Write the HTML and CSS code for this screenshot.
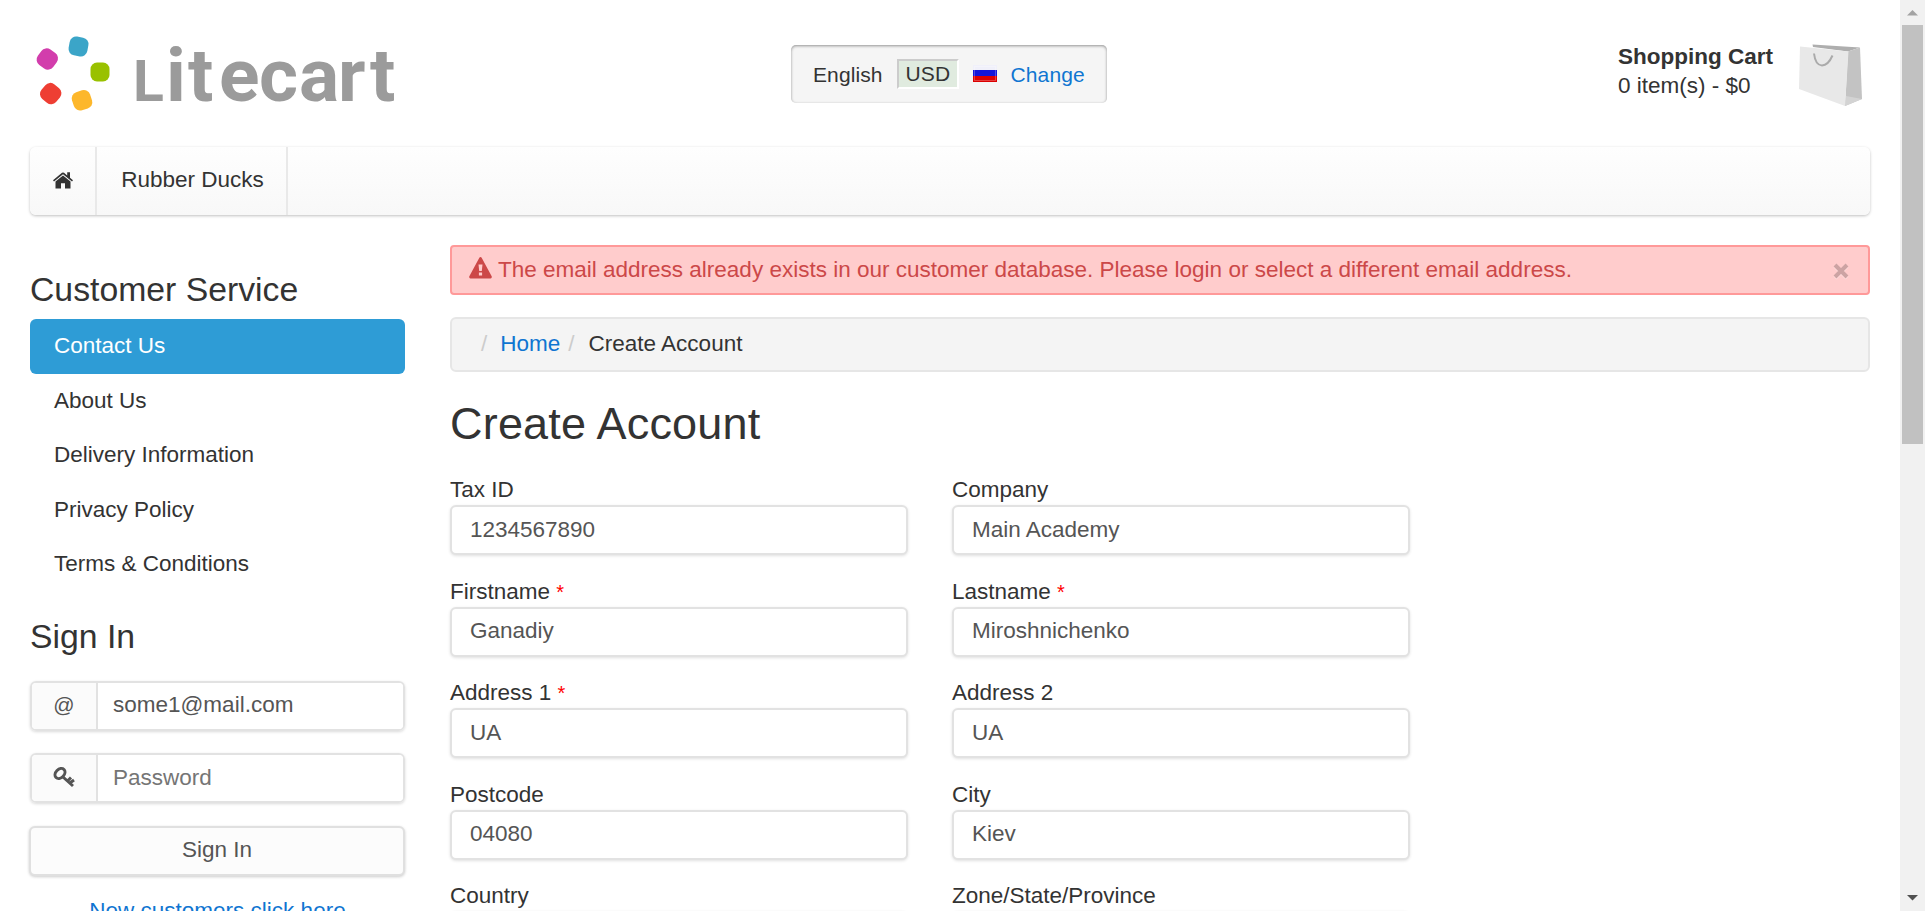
FILE: index.html
```html
<!DOCTYPE html>
<html lang="en">
<head>
<meta charset="utf-8">
<title>Create Account</title>
<link rel="stylesheet" href="styles.css">
</head>
<body>
<div class="window">
<div class="page">
  <header class="header">
    <svg class="logo" width="372" height="84" viewBox="30 30 372 84">
      <g transform="translate(78.5 46.5) rotate(10)"><rect class="c-blue" x="-9.5" y="-9.5" width="19" height="19" rx="6.5"/></g>
      <g transform="translate(47.3 59) rotate(36)"><rect class="c-pink" x="-9.5" y="-9.5" width="19" height="19" rx="6.5"/></g>
      <g transform="translate(100 72)"><rect class="c-green" x="-9.5" y="-9.5" width="19" height="19" rx="6.5"/></g>
      <g transform="translate(50.7 93.6) rotate(40)"><rect class="c-red" x="-9.5" y="-9.5" width="19" height="19" rx="6.5"/></g>
      <g transform="translate(82 100.3) rotate(-18)"><rect class="c-yellow" x="-9.5" y="-9.5" width="19" height="19" rx="6.5"/></g>
      <text class="wordmark" y="101"><tspan class="wordmark-l" x="133">L</tspan><tspan x="166 188 219 259 299 338 370">itecart</tspan></text>
    </svg>
    <div class="region">
      <span>English</span>
      <span class="currency">USD</span>
      <svg class="flag" width="24" height="17" viewBox="0 0 24 17">
        <rect class="flag-white" width="24" height="6"/>
        <rect class="flag-blue" y="5" width="24" height="7"/>
        <rect class="flag-red" y="11" width="24" height="6"/>
        <rect class="flag-gloss" x="1.5" y="1.5" width="21" height="14"/>
      </svg>
      <a class="link" href="#">Change</a>
    </div>
    <div class="cart">
      <div class="cart-text"><strong>Shopping Cart</strong><span>0 item(s) - $0</span></div>
      <svg width="64" height="64" viewBox="0 0 64 64">
        <path class="bag-inside" d="M13.500 .5L61 3.500L49 7.500L14 3Z"/>
        <path class="bag-side" d="M49 7.500L61 3.500L63 55L46 62Z"/>
        <path class="bag-fold" d="M47 52L63 55L46 62Z"/>
        <path class="bag-front" d="M1 2.500L49.500 7.500L46 62L0 45Z"/>
        <path class="bag-handle" d="M15 9.500C17 26 28 24 33.500 11.500"/>
      </svg>
    </div>
  </header>
  <nav class="menu">
    <a class="menu-home" href="#"><svg width="20" height="17" viewBox="0 0 20 17"><path d="M0 8.200L9 .8Q10 .1 11 .8L14.200 3.400V.3H17V5.700L20 8.200L19 9.400L10 2.200L1 9.400Z"/><path d="M2.500 9.500L10 3.500L17.500 9.500V16.500H12V11.200H8V16.500H2.500Z"/></svg></a>
    <a class="menu-item" href="#">Rubber Ducks</a>
  </nav>
  <div class="columns">
    <aside class="sidebar">
      <h2>Customer Service</h2>
      <ul class="pills">
        <li class="active">Contact Us</li>
        <li>About Us</li>
        <li>Delivery Information</li>
        <li>Privacy Policy</li>
        <li>Terms &amp; Conditions</li>
      </ul>
      <h2 class="signin-title">Sign In</h2>
      <div class="group"><span class="addon">@</span><input class="group-input" value="some1@mail.com"></div>
      <div class="group"><span class="addon"><svg width="22" height="21" viewBox="0 0 22 21"><g class="key"><ellipse cx="7" cy="6.500" rx="4.200" ry="5.600" transform="rotate(45 7 6.500)"/><path d="M10 10L20 19M14.500 14L18 10.500M17.500 15.500L21 13"/></g></svg></span><input class="group-input" placeholder="Password"></div>
      <button class="signin">Sign In</button>
      <a class="link new-customer" href="#">New customers click here</a>
    </aside>
    <main class="main">
      <div class="alert">
        <svg width="23" height="22" viewBox="0 0 23 22"><path fill-rule="evenodd" d="M11.500 0Q12.300 0 12.800 1L22.800 19.500Q23 21.500 21.500 21.500H1.500Q0 21.500 .2 19.500L10.200 1Q10.700 0 11.500 0ZM9.500 7.500L10.200 14H12.800L13.500 7.500ZM9.900 15.600V18.500H13.100V15.600Z"/></svg>
        <span>The email address already exists in our customer database. Please login or select a different email address.</span>
        <svg class="close" width="16" height="17" viewBox="0 0 16 17"><path class="close-light" d="M2 3L14 15M14 3L2 15"/><path class="close-dark" d="M2 2L14 14M14 2L2 14"/></svg>
      </div>
      <div class="breadcrumb"><span class="slash">/</span><a class="link" href="#">Home</a><span class="slash second">/</span><span>Create Account</span></div>
      <h1>Create Account</h1>
      <form class="form">
        <label>Tax ID<input value="1234567890"></label>
        <label>Company<input value="Main Academy"></label>
        <label><span>Firstname <b>*</b></span><input value="Ganadiy"></label>
        <label><span>Lastname <b>*</b></span><input value="Miroshnichenko"></label>
        <label><span>Address 1 <b>*</b></span><input value="UA"></label>
        <label>Address 2<input value="UA"></label>
        <label>Postcode<input value="04080"></label>
        <label>City<input value="Kiev"></label>
        <label>Country<input></label>
        <label>Zone/State/Province<input></label>
      </form>
    </main>
  </div>
</div>
<div class="scrollbar">
  <svg width="25" height="25" viewBox="0 0 25 25"><path class="arrow-up" d="M7 15.500L12.500 10L18 15.500Z"/></svg>
  <div class="thumb"></div>
  <svg class="down" width="25" height="26" viewBox="0 0 25 26"><path class="arrow-down" d="M7 10L12.500 15.500L18 10Z"/></svg>
</div>
</div>
</body>
</html>
```
FILE: styles.css
```css
* { box-sizing: border-box; }
body { margin: 0; overflow: hidden; background: #fff; color: #333; font: 22.5px/30px "Liberation Sans", Arial, sans-serif; }
.window { display: flex; height: 911px; overflow: hidden; }
.page { flex: 1; padding: 30px 30px 0; }
.link { color: #0f75d1; text-decoration: none; }
.header { position: relative; display: flex; justify-content: space-between; height: 117px; }
.logo { display: block; overflow: visible; }
.c-blue { fill: #3ba5c8; }
.c-pink { fill: #d23dac; }
.c-green { fill: #99c100; }
.c-red { fill: #ee3e33; }
.c-yellow { fill: #fdb72b; }
.wordmark { fill: #9b9b9b; font: 700 75px Roboto, sans-serif; }
.wordmark-l { font-size: 57px; }
.region { position: absolute; left: 761px; top: 15px; display: flex; align-items: center; width: 316px; height: 58px; padding: 1px 0 0 22px; border-radius: 5px; background: #f5f5f5; box-shadow: inset 0 1px 3px rgba(0,0,0,.4); font-size: 21px; letter-spacing: .1px; }
.currency { width: 62px; height: 30px; margin: -2px 14px 0 14px; padding-left: 7px; border: 2px solid; border-color: #ccc #fff #fff #ccc; background: #e0ebdf; line-height: 26px; }
.flag { margin-right: 14px; margin-top: -2px; }
.flag-white { fill: #f0f0fa; }
.flag-blue { fill: #1414d8; }
.flag-red { fill: #dc0000; }
.flag-gloss { fill: none; stroke: rgba(255,255,255,.25); }
.cart { display: flex; gap: 26px; padding: 14px 7px 0 0; }
.cart-text { display: flex; flex-direction: column; line-height: 29px; margin-top: -2px; }
.bag-inside { fill: #aeaeae; }
.bag-side { fill: #c3c3c3; }
.bag-fold { fill: #d3d3d3; }
.bag-front { fill: #e8e8e8; }
.bag-handle { fill: none; stroke: #aaa; stroke-width: 2; }
.menu { display: flex; height: 68px; border-radius: 6px; background: linear-gradient(#fefefe, #f8f8f8); box-shadow: 0 1px 3px rgba(0,0,0,.25); }
.menu a { display: flex; align-items: center; justify-content: center; border-right: 2px solid #e9e9e9; color: #333; text-decoration: none; }
.menu-home { width: 67px; padding-bottom: 2px; }
.menu-home svg { fill: #333; }
.menu .menu-item { width: 191px; padding: 0 0 2px 2px; }
.columns { display: flex; gap: 45px; padding-top: 30px; }
.sidebar { width: 375px; display: flex; flex-direction: column; }
h1, h2 { margin: 0; font-weight: 400; }
h2 { font-size: 33.75px; line-height: 37px; padding-top: 26px; }
.pills { margin: 11px 0 0; padding: 0; list-style: none; }
.pills li { height: 54.500px; padding: 12px 24px; border-radius: 6px; }
.pills .active { background: #2e9cd6; color: #fff; }
.signin-title { padding-top: 26px; margin-bottom: 26px; }
.group { display: flex; height: 50px; margin-bottom: 22.500px; border: 2px solid #e2e2e2; border-radius: 6px; box-shadow: 0 1px 3px rgba(0,0,0,.15); overflow: hidden; color: #555; }
.addon { flex: none; display: flex; align-items: center; justify-content: center; width: 66px; border-right: 2px solid #e2e2e2; background: #fbfbfb; font-size: 21px; padding-bottom: 1px; }
.key { fill: none; stroke: #555; stroke-width: 3; }
input { font: inherit; color: #555; }
.group-input { flex: 1; min-width: 0; padding: 0 15px 1px; border: 0; outline: 0; }
.signin { height: 50px; margin-left: -1px; padding: 0 0 1px; border: 2px solid #e0e0e0; border-radius: 6px; background: #fcfcfc; box-shadow: 0 1px 3px rgba(0,0,0,.2); color: #555; font: inherit; }
.new-customer { margin-top: 20px; text-align: center; }
.main { flex: 1; }
.alert { display: flex; align-items: center; height: 50px; padding: 0 19px 0 17px; border: 2px solid #ff9999; border-radius: 4px; background: #ffcccc; color: #cc4848; gap: 6px; }
.alert svg { fill: #cc4848; margin-top: -4px; }
.alert .close { margin: 2px 0 0 auto; }
.close path { fill: none; stroke-width: 4; }
.close-light { stroke: #ffdede; }
.close-dark { stroke: #cca3a3; }
.breadcrumb { display: flex; align-items: center; height: 55px; margin-top: 22px; padding: 0 29px 1px; border: 2px solid #e6e6e6; border-radius: 6px; background: #f4f4f4; }
.slash { color: #ccc; margin-right: 13px; }
.slash.second { margin: 0 14px 0 8px; }
h1 { margin-top: 27px; font-size: 45px; line-height: 50px; letter-spacing: .2px; }
.form { display: grid; grid-template-columns: 458px 458px; column-gap: 44px; margin-top: 26px; }
.form label { display: flex; flex-direction: column; height: 101.500px; line-height: 30px; }
.form input { height: 50px; padding: 0 18px 1px; border: 2px solid #e2e2e2; border-radius: 6px; background: #fff; box-shadow: 0 1px 3px rgba(0,0,0,.12); outline: 0; }
.form b { color: #f00; font-weight: 400; font-size: 20px; line-height: 20px; }
.scrollbar { flex: none; display: flex; flex-direction: column; width: 25px; background: #f1f1f1; }
.scrollbar svg { display: block; flex: none; }
.thumb { height: 419px; margin: 0 2px; background: #c1c1c1; }
.down { margin-top: auto; }
.arrow-up { fill: #a3a3a3; }
.arrow-down { fill: #505050; }
```
